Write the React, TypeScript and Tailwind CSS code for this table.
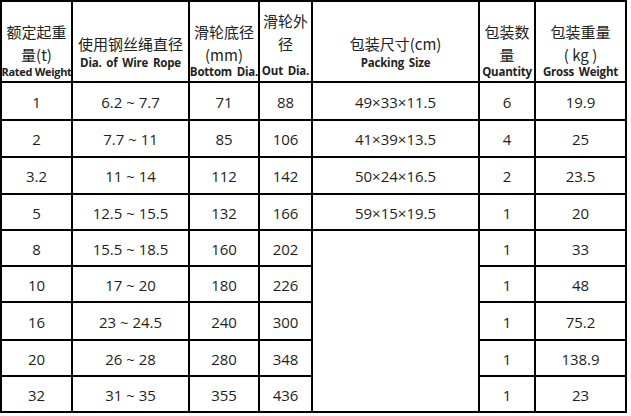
import * as React from "react";

type HeadLine = { text: string; en?: boolean; mt?: string; cls?: string };

const cols = [
  { pt: "pt-[18px]", lines: [{ text: "额定起重" }, { text: "量(t)" }, { text: "Rated Weight", en: true, cls: "text-[11px] tracking-[-0.3px]" }] },
  { pt: "pt-[30px]", lines: [{ text: "使用钢丝绳直径" }, { text: "Dia. of Wire Rope", en: true, mt: "mt-[2px]" }] },
  { pt: "pt-[18px]", lines: [{ text: "滑轮底径" }, { text: "(mm)" }, { text: "Bottom Dia.", en: true }] },
  { pt: "pt-[7px]", lines: [{ text: "滑轮外" }, { text: "径" }, { text: "Out Dia.", en: true, mt: "mt-[10px]" }] },
  { pt: "pt-[30px]", lines: [{ text: "包装尺寸(cm)" }, { text: "Packing Size", en: true, mt: "mt-[2px]" }] },
  { pt: "pt-[18px]", lines: [{ text: "包装数" }, { text: "量" }, { text: "Quantity", en: true }] },
  { pt: "pt-[18px]", lines: [{ text: "包装重量" }, { text: "( kg )" }, { text: "Gross Weight", en: true }] },
] as { pt: string; lines: HeadLine[] }[];

const rows = [
  ["1", "6.2 ~ 7.7", "71", "88", "49×33×11.5", "6", "19.9"],
  ["2", "7.7 ~ 11", "85", "106", "41×39×13.5", "4", "25"],
  ["3.2", "11 ~ 14", "112", "142", "50×24×16.5", "2", "23.5"],
  ["5", "12.5 ~ 15.5", "132", "166", "59×15×19.5", "1", "20"],
  ["8", "15.5 ~ 18.5", "160", "202", null, "1", "33"],
  ["10", "17 ~ 20", "180", "226", null, "1", "48"],
  ["16", "23 ~ 24.5", "240", "300", null, "1", "75.2"],
  ["20", "26 ~ 28", "280", "348", null, "1", "138.9"],
  ["32", "31 ~ 35", "355", "436", null, "1", "23"],
];

function Cell({ children }: { children?: React.ReactNode }) {
  return (
    <div className="flex items-center justify-center bg-white pt-[2px] text-[15px] text-[#1e1e1e]">
      {children}
    </div>
  );
}

export default function App() {
  return (
    <div className="h-[416px] w-[631px] overflow-hidden bg-white font-['Open_Sans','Noto_Sans_CJK_SC',sans-serif]">
      <div className="grid w-[627px] grid-cols-[69px_115px_68px_51px_165px_54px_89px] grid-rows-[79px_36px_35px_35px_34px_34px_34px_36px_34px_34px] gap-[2px] bg-black p-[2px]">
        {cols.map((c, i) => (
          <div key={i} className={`flex flex-col items-center bg-white text-[#222] ${c.pt}`}>
            {c.lines.map((l, j) =>
              l.en ? (
                <div
                  key={j}
                  className={`whitespace-nowrap leading-[12px] font-bold ${l.cls ?? "text-[11.5px] tracking-[-0.2px] [word-spacing:2px]"} ${l.mt ?? ""}`}
                >
                  {l.text}
                </div>
              ) : (
                <div key={j} className="whitespace-nowrap font-['Noto_Sans_CJK_SC',sans-serif] text-[15px] leading-[23px]">
                  {l.text}
                </div>
              )
            )}
          </div>
        ))}
        {rows.map((r, i) =>
          r.map((v, j) => {
            if (j === 4 && v === null) {
              if (i === 4) return <div key={`${i}-${j}`} className="row-span-5 bg-white" />;
              return null;
            }
            return <Cell key={`${i}-${j}`}>{v}</Cell>;
          })
        )}
      </div>
    </div>
  );
}
